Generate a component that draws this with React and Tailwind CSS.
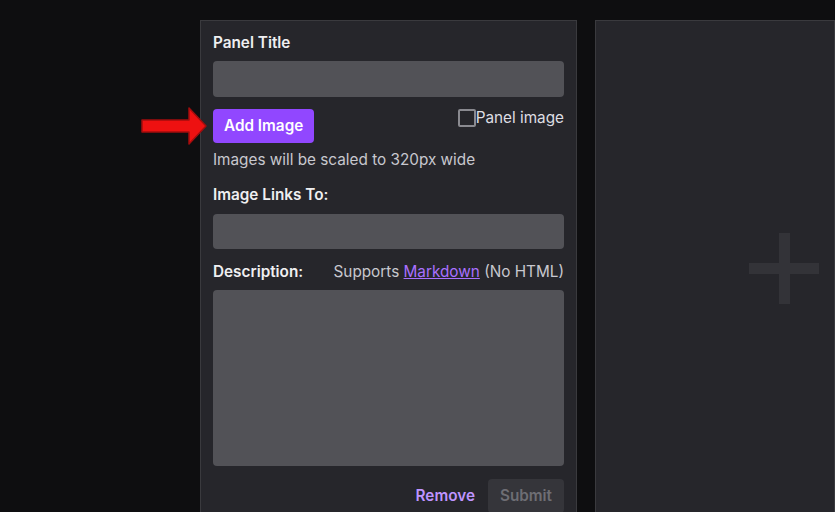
import { useState } from "react"

function RedArrow() {
  return (
    <svg
      className="absolute left-[140px] top-[106px]"
      width="68"
      height="40"
      viewBox="0 0 68 40"
    >
      <path
        d="M2 14 H49 V2 L66 20 L49 38 V26 H2 Z"
        fill="#ee1111"
        stroke="#a30d0d"
        strokeWidth="1.5"
        strokeLinejoin="round"
      />
    </svg>
  )
}

export default function App() {
  const [checked, setChecked] = useState(false)

  return (
    <div
      className="relative w-[835px] h-[512px] overflow-hidden bg-[#0e0e10] flex gap-[18px] pl-[200px] pt-[20px] text-[15.3px]"
      style={{ fontFamily: "Inter, 'Noto Sans', sans-serif" }}
    >
      <RedArrow />

      {/* Edit panel */}
      <div className="w-[377px] shrink-0 h-[520px] bg-[#26262b] border border-[#3a3a3e] px-[12px] pt-[13px] flex flex-col">
        <label className="font-semibold text-[#efeff1] leading-[18px]">Panel Title</label>
        <div className="mt-[9px] h-[36px] rounded-[4px] bg-[#525257]" />

        <div className="mt-[12px] flex justify-between items-start">
          <button className="h-[34px] px-[11px] rounded-[4px] bg-[#9147ff] text-white font-semibold">
            Add Image
          </button>
          <label className="flex items-center mt-[-1px]">
            <span
              onClick={() => setChecked((prev) => !prev)}
              className="w-[18px] h-[18px] border-2 border-[#8a8a90] rounded-[2px]"
            />
            <span className="text-[#dedee3] leading-[20px]">Panel image</span>
          </label>
        </div>

        <p className="mt-[8px] text-[#c8c8cf] leading-[18px]">
          Images will be scaled to 320px wide
        </p>

        <label className="mt-[17px] font-semibold text-[#efeff1] leading-[18px]">Image Links To:</label>
        <div className="mt-[10px] h-[35px] rounded-[4px] bg-[#525257]" />

        <div className="mt-[14px] flex justify-between items-center leading-[18px]">
          <span className="font-semibold text-[#efeff1]">Description:</span>
          <span className="text-[#c8c8cf]">
            Supports{" "}
            <a className="text-[#a970ff] underline">Markdown</a> (No HTML)
          </span>
        </div>
        <div className="mt-[9px] h-[176px] rounded-[4px] bg-[#525257]" />

        <div className="mt-[13px] flex justify-end items-center gap-[13px]">
          <button className="font-semibold text-[#bf94ff]">Remove</button>
          <button className="h-[34px] px-[12px] rounded-[4px] bg-[#35353a] font-semibold text-[#6e6e74]">
            Submit
          </button>
        </div>
      </div>

      {/* Add panel placeholder */}
      <div className="flex-1 h-[520px] bg-[#26262b] border border-[#3a3a3e] flex items-center justify-center">
        <div className="relative w-[70px] h-[71px] mt-[-24px] ml-[138px]">
          <div className="absolute left-0 top-[30px] w-[70px] h-[11px] bg-[#333338]" />
          <div className="absolute left-[30px] top-0 w-[11px] h-[71px] bg-[#333338]" />
        </div>
      </div>
    </div>
  )
}
